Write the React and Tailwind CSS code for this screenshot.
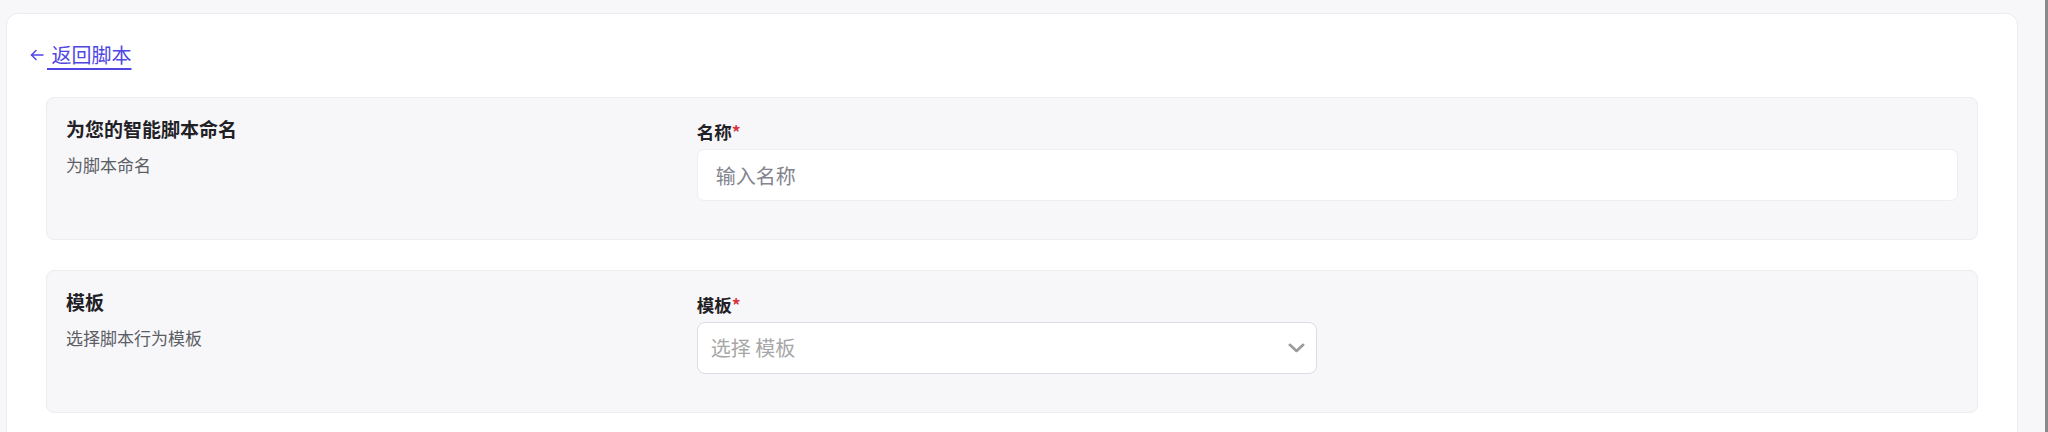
import { useState } from 'react';

const SECTIONS = [
  {
    id: 'name',
    title: '为您的智能脚本命名',
    desc: '为脚本命名',
    label: '名称',
    kind: 'input',
    placeholder: '输入名称',
  },
  {
    id: 'template',
    title: '模板',
    desc: '选择脚本行为模板',
    label: '模板',
    kind: 'select',
    placeholder: '选择 模板',
  },
];

function ArrowLeft() {
  return (
    <svg width="16" height="16" viewBox="0 0 16 16" fill="none" stroke="currentColor" strokeWidth="1.5" strokeLinecap="round" strokeLinejoin="round">
      <path d="M14 8H2.5" />
      <path d="M7 3.5L2.5 8L7 12.5" />
    </svg>
  );
}

function Chevron() {
  return (
    <svg width="17" height="10" viewBox="0 0 17 10" fill="none" stroke="#9b9b9b" strokeWidth="2.6" strokeLinecap="round" strokeLinejoin="round">
      <path d="M1.8 1.8L8.5 8L15.2 1.8" />
    </svg>
  );
}

function Field({ section, value, onChange }) {
  if (section.kind === 'input') {
    return (
      <input
        value={value}
        onChange={(e) => onChange(e.target.value)}
        placeholder={section.placeholder}
        className="mt-[4px] block w-full h-[52px] rounded-[7px] border border-[#eeeef2] bg-white px-[18px] text-[20px] text-[#222] outline-none placeholder:text-[#83858f]"
      />
    );
  }
  return (
    <button
      type="button"
      className="mt-[4px] flex w-[620px] h-[52px] items-center justify-between rounded-[8px] border border-[#dcdce2] bg-white pl-[13px] pr-[11px] text-left"
    >
      <span className="text-[20px] text-[#a7a7a7]">{section.placeholder}</span>
      <Chevron />
    </button>
  );
}

export default function App() {
  const [name, setName] = useState('');

  return (
    <div
      className="h-[432px] overflow-hidden bg-[#f7f7f9] flex border-r-[3px] border-[#8a8a8a]"
      style={{ fontFamily: '"Noto Sans CJK SC", "Noto Sans", sans-serif' }}
    >
      <div className="flex-1 pl-[6px] pr-[27px] pt-[13px]">
        <div className="rounded-[12px] border border-[#ececf0] bg-white px-[22px] pt-[27px] pb-[60px]">
          <a href="#" className="flex items-center text-[20px] leading-[28px] text-[#4f46e5]">
            <ArrowLeft />
            <span className="ml-[2px] underline decoration-[1.5px] underline-offset-[5px]">&nbsp;返回脚本</span>
          </a>

          <div className="mx-[17px] mt-[28px] flex flex-col gap-[30px]">
            {SECTIONS.map((s) => (
              <div
                key={s.id}
                className="grid grid-cols-3 h-[143px] rounded-[8px] border border-[#ececf1] bg-[#f7f7f9] px-[19px] pt-[21px]"
              >
                <div>
                  <div className="text-[19px] leading-[20px] font-bold text-[#1f2126]">{s.title}</div>
                  <div className="mt-[14px] text-[17px] leading-[24px] text-[#5c5e66]">{s.desc}</div>
                </div>
                <div className="col-span-2">
                  <div className="text-[17.5px] leading-[26px] font-bold text-[#1f2126]">
                    {s.label}
                    <span className="text-[#d9363e]">*</span>
                  </div>
                  <Field section={s} value={name} onChange={setName} />
                </div>
              </div>
            ))}
          </div>
        </div>
      </div>
    </div>
  );
}
